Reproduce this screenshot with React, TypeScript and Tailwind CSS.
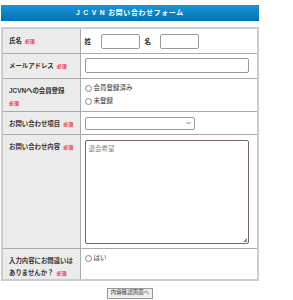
import React from "react";

const Required = () => (
  <span className="ml-[3px] text-[5px] font-bold text-[#e8334a] whitespace-nowrap">必須</span>
);

const Radio = ({ label }: { label: string }) => (
  <label className="flex items-center gap-[2px] h-[13px]">
    <span className="inline-block w-[7px] h-[7px] rounded-full border border-[#888] bg-white" />
    <span className="text-[6.5px] text-[#333]">{label}</span>
  </label>
);

const labelCls =
  "w-[78px] bg-[#ebebeb] border border-[#aaa] align-top pl-[6px] pr-[1px] pt-[6px] text-[6.4px] font-bold leading-[12px] text-[#333] whitespace-nowrap";
const valueCls = "border border-[#aaa] align-top px-[4px] bg-white";

export default function App() {
  return (
    <div
      className="w-[258px] ml-[1px] pt-[5px] bg-white"
      style={{ fontFamily: '"Liberation Sans", "Noto Sans CJK JP", sans-serif' }}
    >
      <div className="h-[16px] flex items-center justify-center bg-gradient-to-b from-[#1a96d6] to-[#0072b5] text-white text-[6.8px] font-bold tracking-[0.8px]">
        J C V N お問い合わせフォーム
      </div>
      <table className="mt-[6px] w-full table-fixed border-collapse border-2 border-[#ccc]">
        <colgroup>
          <col className="w-[78px]" />
          <col />
        </colgroup>
        <tbody>
          <tr className="h-[25px]">
            <td className={labelCls}>
              氏名
              <Required />
            </td>
            <td className={valueCls}>
              <div className="flex items-center pt-[5px] text-[6.5px] font-bold text-[#333]">
                <span className="w-[16px]">姓</span>
                <span className="w-[39px] h-[15px] rounded-[2px] border border-[#999]" />
                <span className="ml-[5px] w-[15px]">名</span>
                <span className="w-[39px] h-[15px] rounded-[2px] border border-[#999]" />
              </div>
            </td>
          </tr>
          <tr className="h-[25px]">
            <td className={labelCls}>
              メールアドレス
              <Required />
            </td>
            <td className={valueCls}>
              <div className="mt-[4px] w-[164px] h-[15px] rounded-[2px] border border-[#999]" />
            </td>
          </tr>
          <tr className="h-[33px]">
            <td className={labelCls}>
              JCVNへの会員登録
              <br />
              <span className="text-[5px] font-bold text-[#e8334a]">必須</span>
            </td>
            <td className={valueCls}>
              <div className="pt-[3px]">
                <Radio label="会員登録済み" />
                <Radio label="未登録" />
              </div>
            </td>
          </tr>
          <tr className="h-[23px]">
            <td className={labelCls}>
              お問い合わせ項目
              <Required />
            </td>
            <td className={valueCls}>
              <div className="mt-[5px] w-[110px] h-[13px] rounded-[2px] border border-[#999] flex items-center justify-end pr-[3px]">
                <svg width="5" height="4" viewBox="0 0 5 4">
                  <path d="M0.5 1 L2.5 3 L4.5 1" stroke="#555" strokeWidth="0.8" fill="none" />
                </svg>
              </div>
            </td>
          </tr>
          <tr className="h-[114px]">
            <td className={labelCls}>
              お問い合わせ内容
              <Required />
            </td>
            <td className={valueCls}>
              <div className="relative mt-[5px] w-[164px] h-[104px] rounded-[2px] border border-[#766] px-[3px] pt-[3px] text-[6.5px] text-[#888]">
                退会希望
                <svg className="absolute right-[1px] bottom-[1px]" width="4" height="4" viewBox="0 0 4 4">
                  <path d="M4 0 L4 4 L0 4 Z" fill="#888" />
                </svg>
              </div>
            </td>
          </tr>
          <tr className="h-[30px]">
            <td className={labelCls}>
              入力内容にお間違いは
              <br />
              ありませんか？
              <Required />
            </td>
            <td className={valueCls}>
              <div className="pt-[3px]">
                <Radio label="はい" />
              </div>
            </td>
          </tr>
        </tbody>
      </table>
      <div className="flex justify-center mt-[7px]">
        <button className="h-[11px] px-[3px] border border-[#999] bg-[#efefef] text-[5.5px] text-[#333] leading-none">
          内容確認画面へ
        </button>
      </div>
    </div>
  );
}
